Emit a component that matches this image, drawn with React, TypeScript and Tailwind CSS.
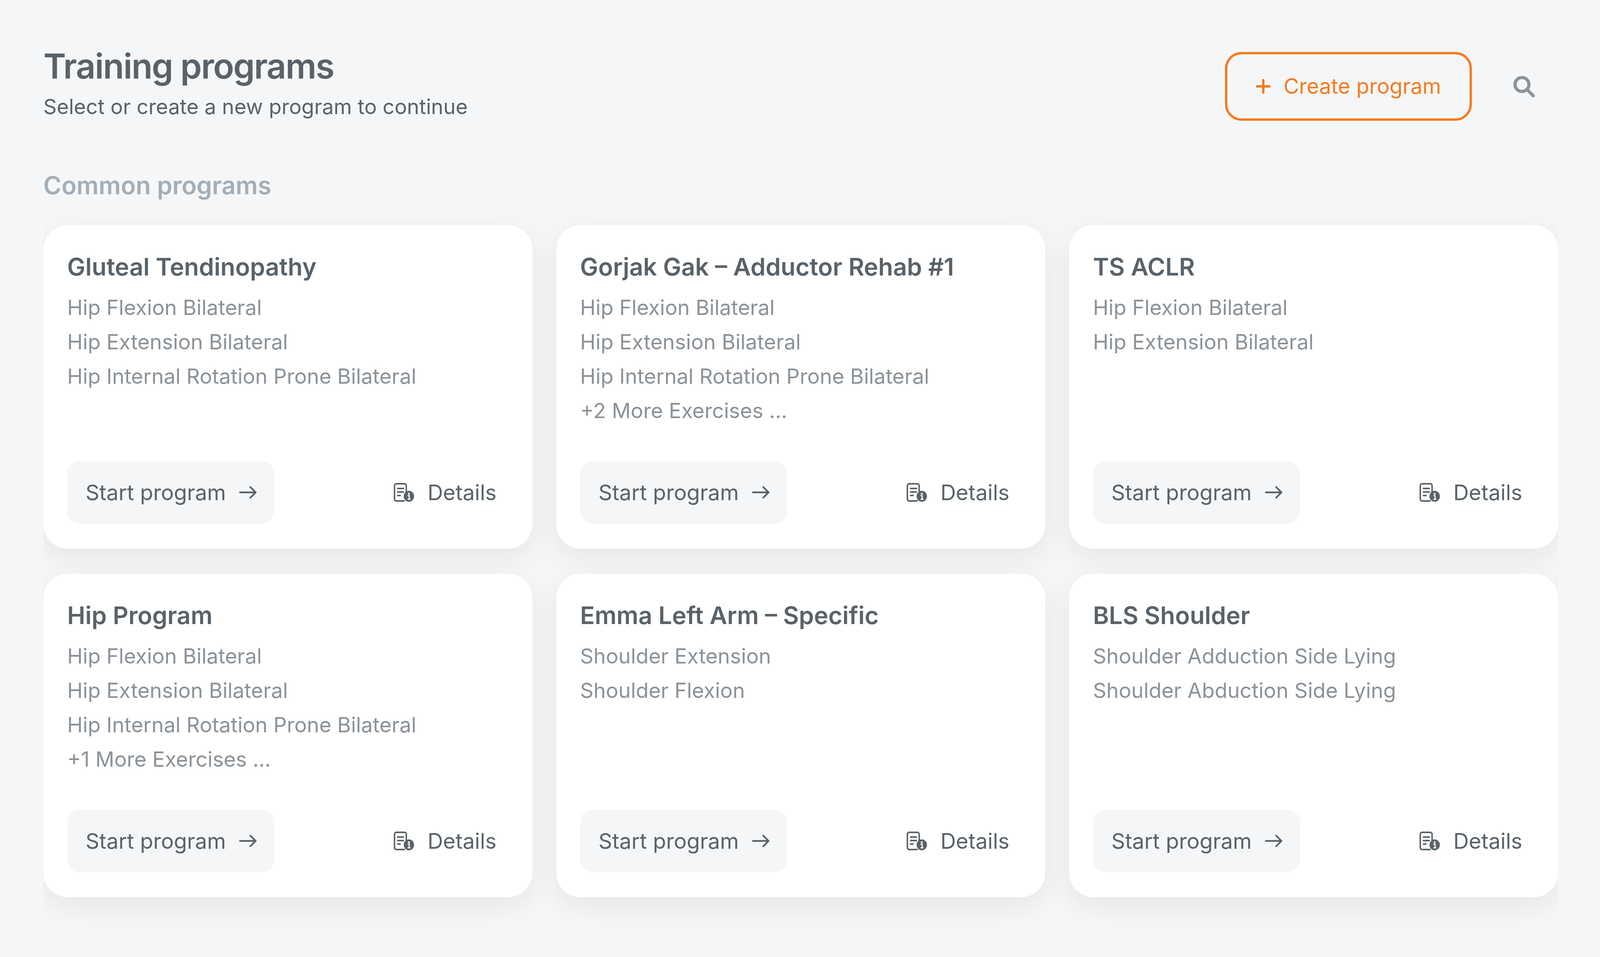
const programs = [
  { title: "Gluteal Tendinopathy", items: ["Hip Flexion Bilateral", "Hip Extension Bilateral", "Hip Internal Rotation Prone Bilateral"] },
  { title: "Gorjak Gak – Adductor Rehab #1", items: ["Hip Flexion Bilateral", "Hip Extension Bilateral", "Hip Internal Rotation Prone Bilateral", "+2 More Exercises ..."] },
  { title: "TS ACLR", items: ["Hip Flexion Bilateral", "Hip Extension Bilateral"] },
  { title: "Hip Program", items: ["Hip Flexion Bilateral", "Hip Extension Bilateral", "Hip Internal Rotation Prone Bilateral", "+1 More Exercises ..."] },
  { title: "Emma Left Arm – Specific", items: ["Shoulder Extension", "Shoulder Flexion"] },
  { title: "BLS Shoulder", items: ["Shoulder Adduction Side Lying", "Shoulder Abduction Side Lying"] },
];

function ArrowIcon() {
  return (
    <svg width="45" height="32" viewBox="0 0 45 32" fill="none" stroke="#596268" strokeWidth="4.5" strokeLinecap="round" strokeLinejoin="round">
      <path d="M2.5 16H42.5M29 2.5L42.5 16L29 29.5" />
    </svg>
  );
}

function DetailsIcon() {
  return (
    <svg width="52" height="48" viewBox="0 0 55 48" preserveAspectRatio="none" fill="none">
      <path d="M30 46H7a5 5 0 0 1-5-5V7a5 5 0 0 1 5-5h22a5 5 0 0 1 5 5v16" stroke="#596268" strokeWidth="4" strokeLinejoin="round" />
      <path d="M10.5 14h16M10.5 23h16M10.5 32h7" stroke="#596268" strokeWidth="4" strokeLinecap="round" />
      <circle cx="41" cy="34" r="14" fill="#596268" />
      <circle cx="41" cy="27.5" r="2.6" fill="#fff" />
      <path d="M37.5 32.5h4.5v8.5M37.5 41.5h8" stroke="#fff" strokeWidth="3" />
    </svg>
  );
}

function Card({ title, items }: { title: string; items: string[] }) {
  return (
    <div className="flex h-[828px] flex-col rounded-[62px] bg-white px-[61px] pt-[67px] pb-[64px] shadow-[0_22px_68px_rgba(20,25,35,0.07)]">
      <h3 className="text-[62px] leading-[80px] font-semibold text-[#596268]">{title}</h3>
      <ul className="mt-[20px] flex flex-col text-[53.5px] leading-[88px] text-[#8b9298]">
        {items.map((t) => (
          <li key={t}>{t}</li>
        ))}
      </ul>
      <div className="mt-auto flex items-center justify-between pr-[31px]">
        <button className="flex h-[160px] w-[530px] items-center gap-[34px] rounded-[32px] bg-[#f5f6f8] pl-[47px] text-[55px] text-[#596268]">
          <span>Start program</span>
          <ArrowIcon />
        </button>
        <button className="flex items-center gap-[34px] text-[55px] text-[#596268]">
          <DetailsIcon />
          <span>Details</span>
        </button>
      </div>
    </div>
  );
}

export default function App() {
  return (
    <div className="min-h-[2449px] bg-[#f5f6f8] pt-[110px] pr-[107px] pl-[111px] font-['Inter',sans-serif]">
      <header className="flex items-start justify-between">
        <div>
          <h1 className="text-[88px] leading-[118px] font-semibold tracking-[-2px] text-[#596268]">Training programs</h1>
          <p className="mt-[9px] text-[53.2px] leading-[72px] text-[#596268]">Select or create a new program to continue</p>
        </div>
        <div className="mt-[23px] flex items-center gap-[106px] pr-[60px]">
          <button className="flex h-[176px] w-[632px] items-center justify-center gap-[33px] rounded-[42px] border-[6px] border-[#f57a20] text-[54.3px] text-[#f57a20]">
            <svg width="38" height="38" viewBox="0 0 38 38" fill="none" stroke="#f57a20" strokeWidth="6" strokeLinecap="round">
              <path d="M19 3v32M3 19h32" />
            </svg>
            <span>Create program</span>
          </button>
          <svg width="55" height="55" viewBox="0 0 57 57" fill="none" stroke="#8c9399" strokeWidth="8.5" strokeLinecap="round">
            <circle cx="23" cy="23" r="18.5" />
            <path d="M37 37l16 16" />
          </svg>
        </div>
      </header>
      <h2 className="mt-[125px] text-[63px] leading-[80px] font-semibold text-[#a3aeb6]">Common programs</h2>
      <div className="overflow-x-hidden pt-[62px] pb-[150px]">
        <div className="grid grid-cols-3 gap-x-[61px] gap-y-[64px]">
          {programs.map((p) => (
            <Card key={p.title} {...p} />
          ))}
        </div>
      </div>
    </div>
  );
}
